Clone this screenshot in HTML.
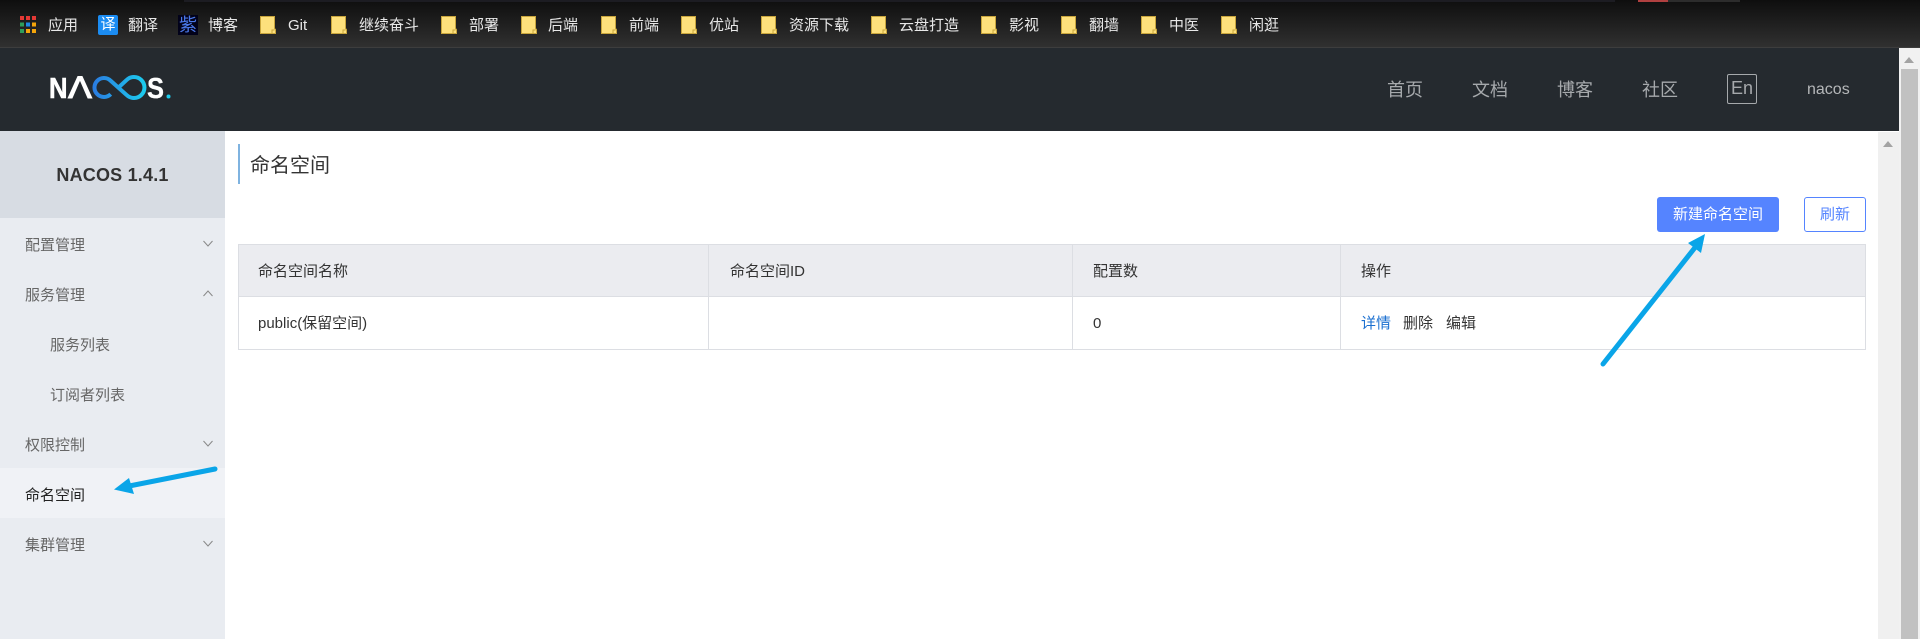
<!DOCTYPE html>
<html lang="zh"><head><meta charset="utf-8"><title>NACOS</title>
<style>
html,body{margin:0;padding:0;width:1920px;height:639px;overflow:hidden;background:#fff}
body{position:relative;font-family:"Liberation Sans","Noto Sans CJK SC",sans-serif;font-size:15px;color:#333}
.a{position:absolute;white-space:nowrap}
.b{color:#e8e8e8;font-size:15px;line-height:20px;top:16px}
.f{position:absolute;top:16px;width:16px;height:18px}
.n{color:#a6a9ac;font-size:18px;line-height:26px;top:77px}
.s{color:#666;left:25px;line-height:20px}
.t{line-height:20px}
.c{position:absolute;left:202px;width:12px;height:7px}
</style></head><body>
<svg width="0" height="0" style="position:absolute"><symbol id="fo" viewBox="0 0 16 18"><path d="M.5.5H14.500V12.500L15.500 13.500V17.500H.5Z" fill="#fde07c" stroke="#c8a53c"/><path d="M12 17V14H14.500" fill="none" stroke="#c8a53c"/></symbol></svg>

<div class="a" style="left:0;top:0;width:1920px;height:47px;background:linear-gradient(#0e0e0e,#303030)"></div>
<div class="a" style="left:184px;top:0;width:1431px;height:2px;background:#1c1c22"></div>
<div class="a" style="left:1638px;top:0;width:30px;height:2px;background:#b04040"></div>
<div class="a" style="left:1668px;top:0;width:72px;height:2px;background:#2c2c2c"></div>
<div class="a" style="left:0;top:47px;width:1920px;height:1px;background:#3d3d3d"></div>

<svg class="a" style="left:20px;top:16px" width="16" height="17">
<rect x="0" y="0" width="4" height="4" fill="#e53935"/><rect x="6" y="0" width="4" height="4" fill="#e53935"/><rect x="12" y="0" width="4" height="4" fill="#e53935"/>
<rect x="0" y="6.500" width="4" height="4" fill="#2e9e5b"/><rect x="6" y="6.500" width="4" height="4" fill="#1e88e5"/><rect x="12" y="6.500" width="4" height="4" fill="#f5a50a"/>
<rect x="0" y="13" width="4" height="4" fill="#2e9e5b"/><rect x="6" y="13" width="4" height="4" fill="#f5a50a"/><rect x="12" y="13" width="4" height="4" fill="#f5a50a"/>
</svg>
<div class="a b" style="left:48px">应用</div>
<div class="a" style="left:98px;top:15px;width:20px;height:20px;background:#1b8cf2;border-radius:2px;color:#fff;font-size:15px;line-height:20px;text-align:center">译</div>
<div class="a b" style="left:128px">翻译</div>
<div class="a" style="left:178px;top:15px;width:20px;height:20px;background:#02021a;color:#4a78e8;font-size:18px;line-height:20px;text-align:center">紫</div>
<div class="a b" style="left:208px">博客</div>

<svg class="f" style="left:260px"><use href="#fo"/></svg><div class="a b" style="left:288px">Git</div>
<svg class="f" style="left:331px"><use href="#fo"/></svg><div class="a b" style="left:359px">继续奋斗</div>
<svg class="f" style="left:441px"><use href="#fo"/></svg><div class="a b" style="left:469px">部署</div>
<svg class="f" style="left:521px"><use href="#fo"/></svg><div class="a b" style="left:548px">后端</div>
<svg class="f" style="left:601px"><use href="#fo"/></svg><div class="a b" style="left:629px">前端</div>
<svg class="f" style="left:681px"><use href="#fo"/></svg><div class="a b" style="left:709px">优站</div>
<svg class="f" style="left:761px"><use href="#fo"/></svg><div class="a b" style="left:789px">资源下载</div>
<svg class="f" style="left:871px"><use href="#fo"/></svg><div class="a b" style="left:899px">云盘打造</div>
<svg class="f" style="left:981px"><use href="#fo"/></svg><div class="a b" style="left:1009px">影视</div>
<svg class="f" style="left:1061px"><use href="#fo"/></svg><div class="a b" style="left:1089px">翻墙</div>
<svg class="f" style="left:1141px"><use href="#fo"/></svg><div class="a b" style="left:1169px">中医</div>
<svg class="f" style="left:1221px"><use href="#fo"/></svg><div class="a b" style="left:1249px">闲逛</div>

<div class="a" style="left:0;top:48px;width:1899px;height:83px;background:#252a2f"></div>
<svg class="a" style="left:40px;top:65px" width="140" height="45" viewBox="40 65 140 45">
<defs><linearGradient id="g" gradientUnits="userSpaceOnUse" x1="94" x2="146" y1="0" y2="0"><stop offset="0" stop-color="#2a7de1"/><stop offset="1" stop-color="#1ccdee"/></linearGradient></defs>
<text x="49" y="98" font-family="Liberation Sans" font-weight="bold" font-size="29" fill="#fff" stroke="#fff" stroke-width=".6" textLength="18.500" lengthAdjust="spacingAndGlyphs">N</text>
<text x="68" y="98" font-family="DejaVu Sans" font-size="29" fill="#fff" stroke="#fff" stroke-width="1" textLength="24" lengthAdjust="spacingAndGlyphs">Λ</text>
<path d="M110.700 94.200A9.500 9.500 0 1 1 110.700 80.800L126.500 94.900A10.500 10.500 0 1 0 126.500 80.100L118.500 87.500" fill="none" stroke="url(#g)" stroke-width="4"/>
<text x="147" y="98" font-family="Liberation Sans" font-weight="bold" font-size="29" fill="#fff" stroke="#fff" stroke-width=".3" textLength="17" lengthAdjust="spacingAndGlyphs">S</text>
<circle cx="168.500" cy="96.500" r="2" fill="#1ccdee"/>
</svg>

<div class="a n" style="left:1387px">首页</div>
<div class="a n" style="left:1472px">文档</div>
<div class="a n" style="left:1557px">博客</div>
<div class="a n" style="left:1642px">社区</div>
<div class="a" style="left:1727px;top:74px;width:28px;height:28px;border:1px solid #a6a9ac;border-radius:2px;color:#a6a9ac;font-size:18px;line-height:26px;text-align:center">En</div>
<div class="a" style="left:1807px;top:80px;color:#b5b7b9;font-size:16px;line-height:20px;font-weight:normal">nacos</div>

<div class="a" style="left:1899px;top:48px;width:21px;height:591px;background:#f1f1f1"></div>
<div class="a" style="left:1901px;top:69px;width:17px;height:570px;background:#c1c1c1"></div>
<svg class="a" style="left:1904px;top:57px" width="10" height="6"><path d="M5 0L10 6H0Z" fill="#a3a3a3"/></svg>
<div class="a" style="left:1878px;top:132px;width:21px;height:507px;background:#f0f0f0"></div>
<svg class="a" style="left:1883px;top:141px" width="10" height="6"><path d="M5 0L10 6H0Z" fill="#a3a3a3"/></svg>

<div class="a" style="left:0;top:131px;width:225px;height:508px;background:#e9ecf1"></div>
<div class="a" style="left:0;top:131px;width:225px;height:87px;background:#d7dce3"></div>
<div class="a" style="left:0;top:131px;width:225px;height:87px;line-height:88px;text-align:center;font-size:18px;font-weight:bold;color:#333;letter-spacing:.2px">NACOS 1.4.1</div>
<div class="a" style="left:0;top:468px;width:225px;height:50px;background:#f0f2f6"></div>

<div class="a s" style="top:236px">配置管理</div>
<div class="a s" style="top:286px">服务管理</div>
<div class="a s" style="top:336px;left:50px">服务列表</div>
<div class="a s" style="top:386px;left:50px">订阅者列表</div>
<div class="a s" style="top:436px">权限控制</div>
<div class="a s" style="top:486px;color:#222">命名空间</div>
<div class="a s" style="top:536px">集群管理</div>
<svg class="c" style="top:240px"><path d="M1.500 1L6 6L10.500 1" fill="none" stroke="#888"/></svg>
<svg class="c" style="top:290px"><path d="M1.500 6L6 1L10.500 6" fill="none" stroke="#888"/></svg>
<svg class="c" style="top:440px"><path d="M1.500 1L6 6L10.500 1" fill="none" stroke="#888"/></svg>
<svg class="c" style="top:540px"><path d="M1.500 1L6 6L10.500 1" fill="none" stroke="#888"/></svg>

<div class="a" style="left:238px;top:144px;width:2px;height:40px;background:#7fb3e0"></div>
<div class="a" style="left:250px;top:152px;font-size:20px;line-height:28px;color:#333">命名空间</div>

<div class="a" style="left:1657px;top:197px;width:122px;height:35px;background:#5584ff;border-radius:3px;color:#fff;text-align:center;line-height:36px">新建命名空间</div>
<div class="a" style="left:1804px;top:197px;width:60px;height:33px;border:1px solid #5584ff;border-radius:3px;color:#5584ff;text-align:center;line-height:34px">刷新</div>

<div class="a" style="left:238px;top:244px;width:1626px;height:104px;border:1px solid #dcdee3"></div>
<div class="a" style="left:239px;top:245px;width:1626px;height:51px;background:#ebecf0"></div>
<div class="a" style="left:239px;top:296px;width:1626px;height:1px;background:#dcdee3"></div>
<div class="a" style="left:708px;top:245px;width:1px;height:104px;background:#dcdee3"></div>
<div class="a" style="left:1072px;top:245px;width:1px;height:104px;background:#dcdee3"></div>
<div class="a" style="left:1340px;top:245px;width:1px;height:104px;background:#dcdee3"></div>

<div class="a t" style="left:258px;top:262px">命名空间名称</div>
<div class="a t" style="left:730px;top:262px">命名空间ID</div>
<div class="a t" style="left:1093px;top:262px">配置数</div>
<div class="a t" style="left:1361px;top:262px">操作</div>
<div class="a t" style="left:258px;top:314px">public(保留空间)</div>
<div class="a t" style="left:1093px;top:314px">0</div>
<div class="a t" style="left:1361px;top:314px;color:#1a6fd0">详情</div>
<div class="a t" style="left:1403px;top:314px">删除</div>
<div class="a t" style="left:1446px;top:314px">编辑</div>

<svg class="a" style="left:0;top:0" width="1920" height="639">
<path d="M215 469L124 487" stroke="#0aa5e8" stroke-width="5" stroke-linecap="round" fill="none"/>
<path d="M114 489.500L129 478L134 494Z" fill="#0aa5e8"/>
<path d="M1603 364L1697 245" stroke="#0aa5e8" stroke-width="5" stroke-linecap="round" fill="none"/>
<path d="M1705 234L1688 243L1701 253Z" fill="#0aa5e8"/>
</svg>
</body></html>
